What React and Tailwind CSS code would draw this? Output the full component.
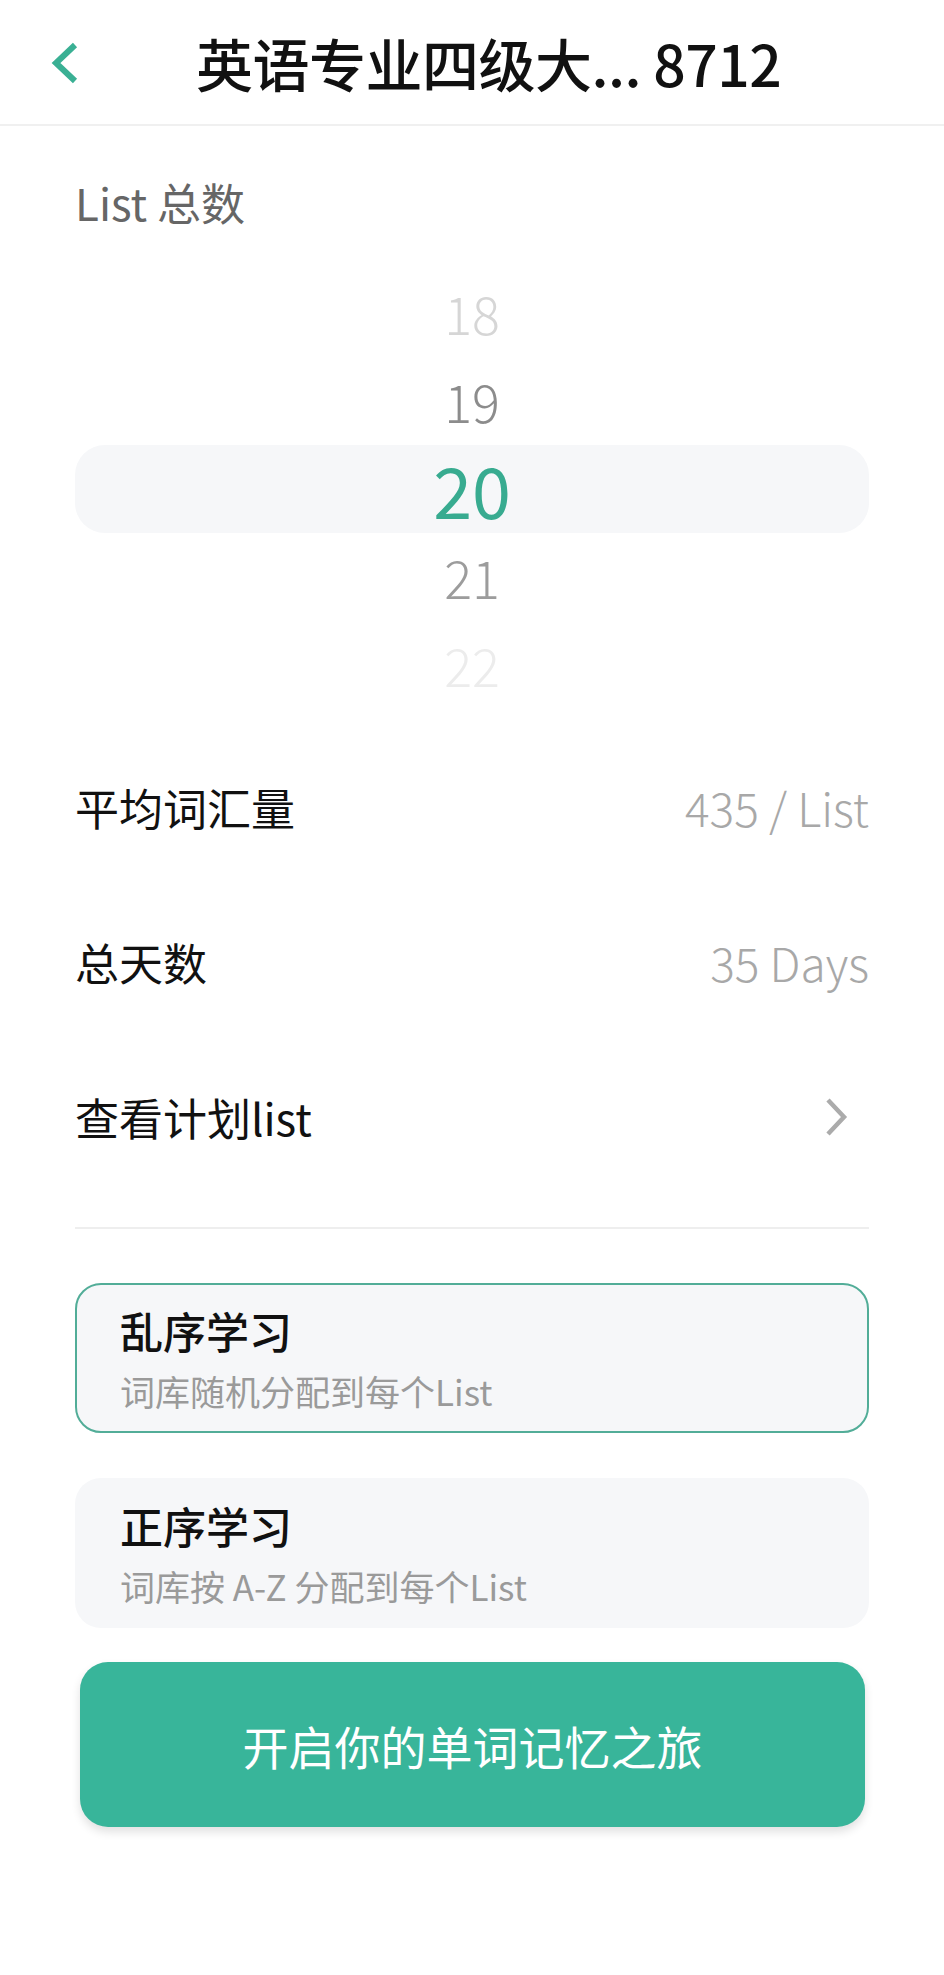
const font = { fontFamily: '"Noto Sans CJK SC", "Noto Sans", sans-serif' }

const pickerItems = [
  { value: 18, className: 'text-[52px] font-light text-[#d6d6d6]' },
  { value: 19, className: 'text-[52px] font-light text-[#8c8c8c]' },
  { value: 20, className: 'text-[70px] font-normal text-[#38ab90]', active: true },
  { value: 21, className: 'text-[52px] font-light text-[#9c9c9c]' },
  { value: 22, className: 'text-[52px] font-light text-[#ececec]' },
]

const BackIcon = () => (
  <svg width="30" height="44" viewBox="0 0 30 44" fill="none">
    <polyline points="26,4 7,22 26,40" stroke="#3ab094" strokeWidth="6" strokeLinejoin="miter" />
  </svg>
)

const NextIcon = () => (
  <svg width="26" height="40" viewBox="0 0 26 40" fill="none">
    <polyline points="5,3 21,20 5,37" stroke="#ababab" strokeWidth="4.5" />
  </svg>
)

const InfoRow = ({ label, value, arrow }) => (
  <div className="flex items-center justify-between h-[155px]">
    <span className="text-[44px] leading-none text-[#111]">{label}</span>
    {value && (
      <span className="text-[46px] leading-none font-light text-[#a8a8a8]">{value}</span>
    )}
    {arrow && (
      <div className="mr-[20px]">
        <NextIcon />
      </div>
    )}
  </div>
)

const ModeCard = ({ title, desc, selected }) => (
  <div
    className={`flex flex-col justify-center gap-[21px] h-[150px] rounded-[26px] bg-[#f6f7f9] pl-[43px] border-2 ${
      selected ? 'border-[#52ad98]' : 'border-transparent'
    }`}
  >
    <span className="text-[43px] leading-none font-medium text-[#111]">{title}</span>
    <span className="text-[35px] leading-none text-[#9a9a9a]">{desc}</span>
  </div>
)

export default function App() {
  return (
    <div className="w-[944px] min-h-[1975px] bg-white" style={font}>
      <header className="flex items-center h-[126px] pl-[49px] border-b-2 border-[#f0f0f0]">
        <div className="pt-[2px]">
          <BackIcon />
        </div>
        <h1 className="ml-[117px] text-[57px] leading-none font-medium text-[#111] tracking-[-0.5px]">
          英语专业四级大... 8712
        </h1>
      </header>

      <main className="px-[75px]">
        <p className="mt-[54px] text-[44px] leading-none text-[#666]">List 总数</p>

        <div className="mt-[45px] flex flex-col">
          {pickerItems.map((item) => (
            <div
              key={item.value}
              className={`flex items-center justify-center h-[88px] ${
                item.active ? 'bg-[#f6f7f9] rounded-[30px]' : ''
              }`}
            >
              <span className={`leading-none ${item.className}`}>{item.value}</span>
            </div>
          ))}
        </div>

        <div className="mt-[20px]">
          <InfoRow label="平均词汇量" value="435 / List" />
          <InfoRow label="总天数" value="35 Days" />
          <InfoRow label="查看计划list" arrow />
        </div>

        <div className="mt-[33px] h-[2px] bg-[#eeeeee]" />

        <div className="mt-[54px] flex flex-col gap-[45px]">
          <ModeCard title="乱序学习" desc="词库随机分配到每个List" selected />
          <ModeCard title="正序学习" desc="词库按 A-Z 分配到每个List" />
        </div>

        <button className="mt-[34px] mx-[5px] w-[785px] h-[165px] rounded-[28px] bg-[#38b59a] text-white text-[46px] leading-none shadow-[0_5px_10px_rgba(0,0,0,0.12)]">
          开启你的单词记忆之旅
        </button>
      </main>
    </div>
  )
}
